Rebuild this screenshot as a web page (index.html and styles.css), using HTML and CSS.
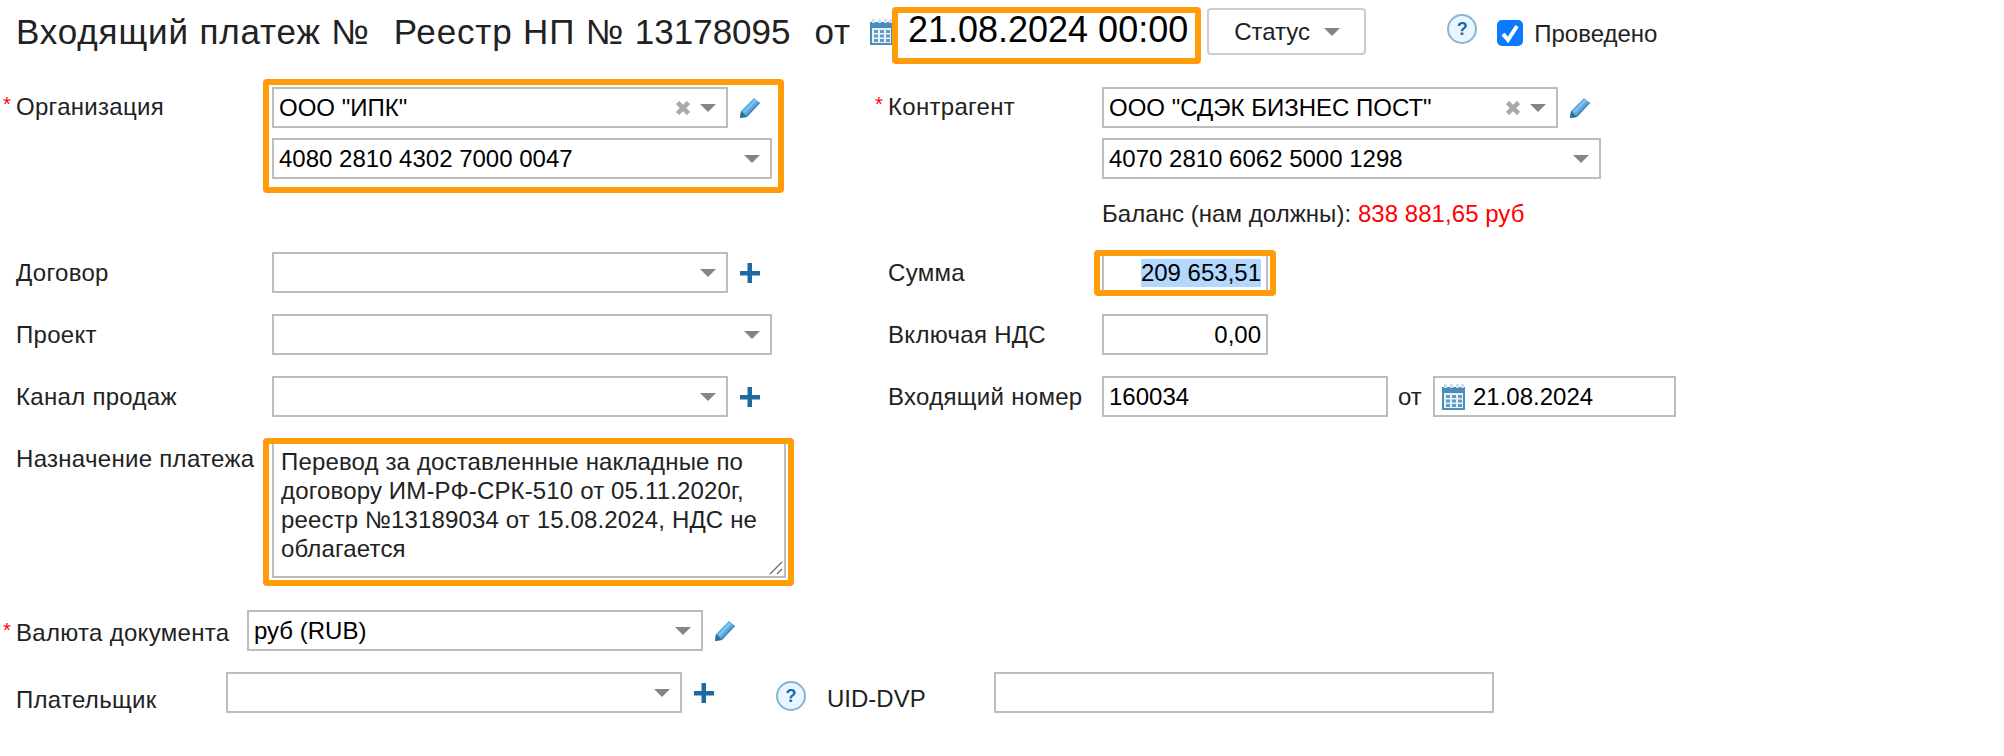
FILE: index.html
```html
<!DOCTYPE html>
<html lang="ru">
<head>
  <meta charset="UTF-8" />
  <title>Входящий платеж</title>
  <link rel="stylesheet" href="styles.css">
</head>
<body>

  <svg class="sprites" width="0" height="0">
    <symbol id="calendar" viewBox="0 0 23 26">
      <rect y="3" width="23" height="23" fill="#4a8dbb"/>
      <path d="M2 0h3v4H2zM8 0h3v4H8zM14 0h3v4h-3zM19 0h3v4h-3z" fill="#cfe0ec"/>
      <rect x="2" y="9" width="19" height="15" fill="#e6f0f7"/>
      <path d="M4 11h4v3H4zM10 11h4v3h-4zM16 11h4v3h-4zM4 15.500h4v3H4zM10 15.500h4v3h-4zM16 15.500h4v3h-4zM4 20h4v3H4zM10 20h4v3h-4zM16 20h4v3h-4z" fill="#5f9cc6"/>
    </symbol>
    <symbol id="pencil" viewBox="0 0 20 20">
      <path d="M14 0l6 5L7 19l-7 1 1-7z" fill="#5aa9e0"/>
      <path d="M1 13l3 3 3 3-7 1z" fill="#2f6d96"/>
      <path d="M19 4l1 1L7 19l-1.500-1z" fill="#4a87b0"/>
      <path d="M14.500 1.500l2 1.500L5 15l-2-1.500z" fill="#82c2ee"/>
    </symbol>
    <symbol id="plus" viewBox="0 0 20 20">
      <path d="M0 8h20v4.500H0zM7.500 0H12v20H7.500z" fill="#1f6a9e"/>
    </symbol>
    <symbol id="caret" viewBox="0 0 16 8">
      <path d="M0 0h16l-8 8z" fill="#858585"/>
    </symbol>
    <symbol id="clear" viewBox="0 0 14 14">
      <path d="M1.500 1.500l11 11M12.500 1.500l-11 11" stroke="#a9a9a9" stroke-width="4.500"/>
    </symbol>
  </svg>

  <div class="title-row">
    <h1 class="title">Входящий платеж №<span class="title-gap">Реестр НП № <span class="title-num">13178095</span></span><span class="title-gap">от</span></h1>
    <svg class="cal-big"><use href="#calendar"/></svg>
    <div class="doc-date mark mark-date">21.08.2024 00:00</div>
    <div class="status-btn">Статус <svg class="caret"><use href="#caret"/></svg></div>
    <div class="help help-top">?</div>
    <span class="check"><svg viewBox="0 0 26 26"><path d="M6 14l5 6 9-14" fill="none" stroke="#fff" stroke-width="4"/></svg></span>
    <span class="check-label">Проведено</span>
  </div>

  <div class="columns">
    <div class="col-left">

      <div class="field field-double">
        <label class="lbl req">Организация</label>
        <div class="stack mark mark-org">
          <div class="with-icon">
            <div class="sel w-short">ООО "ИПК"<span class="sel-icons"><svg class="clear"><use href="#clear"/></svg><svg class="caret"><use href="#caret"/></svg></span></div>
            <svg class="side-icon"><use href="#pencil"/></svg>
          </div>
          <div class="sel w-long">4080 2810 4302 7000 0047<span class="sel-icons"><svg class="caret"><use href="#caret"/></svg></span></div>
        </div>
      </div>

      <div class="field">
        <label class="lbl">Договор</label>
        <div class="with-icon">
          <div class="sel w-short"><span class="sel-icons"><svg class="caret"><use href="#caret"/></svg></span></div>
          <svg class="side-icon"><use href="#plus"/></svg>
        </div>
      </div>

      <div class="field">
        <label class="lbl">Проект</label>
        <div class="sel w-long"><span class="sel-icons"><svg class="caret"><use href="#caret"/></svg></span></div>
      </div>

      <div class="field">
        <label class="lbl">Канал продаж</label>
        <div class="with-icon">
          <div class="sel w-short"><span class="sel-icons"><svg class="caret"><use href="#caret"/></svg></span></div>
          <svg class="side-icon"><use href="#plus"/></svg>
        </div>
      </div>

      <div class="field field-purpose">
        <label class="lbl">Назначение платежа</label>
        <div class="memo mark mark-memo">Перевод за доставленные накладные по<br>договору ИМ-РФ-СРК-510 от 05.11.2020г,<br>реестр №13189034 от 15.08.2024, НДС не<br>облагается<svg class="grip" viewBox="0 0 14 14"><path d="M1 13L13 1M8 13l5-5" stroke="#666" stroke-width="1.200"/></svg></div>
      </div>

    </div>

    <div class="col-right">

      <div class="field field-double">
        <label class="lbl lbl-right req">Контрагент</label>
        <div class="stack">
          <div class="with-icon">
            <div class="sel w-short2">ООО "СДЭК БИЗНЕС ПОСТ"<span class="sel-icons"><svg class="clear"><use href="#clear"/></svg><svg class="caret"><use href="#caret"/></svg></span></div>
            <svg class="side-icon"><use href="#pencil"/></svg>
          </div>
          <div class="sel w-long2">4070 2810 6062 5000 1298<span class="sel-icons"><svg class="caret"><use href="#caret"/></svg></span></div>
          <div class="balance">Баланс (нам должны): <span class="balance-sum">838 881,65 руб</span></div>
        </div>
      </div>

      <div class="field">
        <label class="lbl lbl-right">Сумма</label>
        <div class="inp w-sum mark mark-sum"><span class="selected">209 653,51</span></div>
      </div>

      <div class="field">
        <label class="lbl lbl-right">Включая НДС</label>
        <div class="inp w-sum">0,00</div>
      </div>

      <div class="field">
        <label class="lbl lbl-right">Входящий номер</label>
        <div class="inp inp-left w-num">160034</div>
        <span class="ot">от</span>
        <div class="inp inp-left w-date"><svg class="cal-small"><use href="#calendar"/></svg>21.08.2024</div>
      </div>

    </div>
  </div>

  <div class="field field-currency">
    <label class="lbl lbl-currency req">Валюта документа</label>
    <div class="with-icon">
      <div class="sel w-short">руб (RUB)<span class="sel-icons"><svg class="caret"><use href="#caret"/></svg></span></div>
      <svg class="side-icon"><use href="#pencil"/></svg>
    </div>
  </div>

  <div class="field field-payer">
    <label class="lbl lbl-payer">Плательщик</label>
    <div class="with-icon">
      <div class="sel w-short"><span class="sel-icons"><svg class="caret"><use href="#caret"/></svg></span></div>
      <svg class="side-icon"><use href="#plus"/></svg>
    </div>
    <div class="help help-uid">?</div>
    <span class="uid-label">UID-DVP</span>
    <div class="inp w-uid"></div>
  </div>

</body>
</html>
```

FILE: styles.css
```css
body {
  font-family: "Liberation Sans", Arial, sans-serif;
  font-size: 24px;
  color: #222;
  background: white;
  margin: 0;
  padding: 0;
}
.sprites {
  display: block;
}

/* top line */
.title-row {
  display: flex;
  align-items: flex-start;
  height: 87px;
  padding-left: 16px;
}
.title {
  margin: 12px 0 0;
  font-size: 35px;
  line-height: 40px;
  font-weight: normal;
  letter-spacing: 0.85px;
  white-space: nowrap;
}
.title-gap {
  margin-left: 24px;
}
.title-num {
  letter-spacing: 0;
}
.cal-big {
  width: 23px;
  height: 26px;
  margin: 19px 0 0 19px;
}
.doc-date {
  margin: 7px 0 0 15px;
  font-size: 36px;
  line-height: 46px;
  color: #000;
  white-space: nowrap;
}
.status-btn {
  display: flex;
  align-items: center;
  gap: 14px;
  flex: none;
  box-sizing: border-box;
  width: 159px;
  height: 47px;
  margin: 8px 0 0 19px;
  padding-left: 25px;
  border: 2px solid #ccc;
  border-radius: 4px;
  color: #222;
}
.help {
  flex: none;
  box-sizing: border-box;
  width: 30px;
  height: 30px;
  border: 2px solid #85b5d3;
  border-radius: 50%;
  background: #e9f6ff;
  color: #1a6aa5;
  font-size: 18px;
  font-weight: bold;
  line-height: 26px;
  text-align: center;
}
.help-top {
  margin: 14px 0 0 81px;
}
.check {
  display: block;
  flex: none;
  width: 26px;
  height: 26px;
  margin: 20px 0 0 20px;
  background: #0a7aff;
  border-radius: 5px;
}
.check svg {
  display: block;
}
.check-label {
  margin: 20px 0 0 11px;
  line-height: 28px;
}

/* highlight frames lie over the controls */
.mark {
  position: relative;
}
.mark::after {
  content: "";
  position: absolute;
  inset: 0;
  border: 6px solid #ff9c0a;
  border-radius: 4px;
  pointer-events: none;
}
.mark-date::after {
  inset: 0 -13px -11px -16px;
}
.mark-org::after {
  inset: -8px -12px -14px -9px;
}
.mark-memo::after {
  inset: -5px -10px -10px -11px;
}
.mark-sum::after {
  inset: -4px -10px -5px -10px;
}

/* form */
.columns {
  display: flex;
}
.col-left {
  width: 888px;
  flex: none;
}
.field {
  display: flex;
  align-items: flex-start;
  margin-bottom: 21px;
}
.field-double {
  height: 144px;
}
.lbl {
  flex: none;
  box-sizing: border-box;
  width: 272px;
  height: 41px;
  padding-left: 16px;
  line-height: 42px;
  letter-spacing: 0.3px;
  white-space: nowrap;
}
.field-double .lbl {
  line-height: 35px;
}
.lbl-right {
  width: 214px;
  padding-left: 0;
}
.req::before {
  content: "*";
  display: inline-block;
  width: 13px;
  margin-left: -13px;
  color: #f00;
  font-size: 20px;
  vertical-align: 4px;
}
.stack {
  display: flex;
  flex-direction: column;
  gap: 10px;
}
.with-icon {
  display: flex;
  align-items: center;
  gap: 12px;
}
.side-icon {
  flex: none;
  width: 20px;
  height: 20px;
}
.sel, .inp {
  box-sizing: border-box;
  display: flex;
  align-items: center;
  flex: none;
  height: 41px;
  padding: 0 5px;
  border: 2px solid #bdbdbd;
  background: white;
  color: #000;
  white-space: nowrap;
}
.sel-icons {
  display: flex;
  align-items: center;
  gap: 10px;
  margin-left: auto;
  padding-right: 5px;
}
.caret {
  width: 16px;
  height: 8px;
}
.clear {
  width: 14px;
  height: 14px;
}
.w-short {
  width: 456px;
}
.w-long {
  width: 500px;
}
.w-short2 {
  width: 456px;
}
.w-long2 {
  width: 499px;
}
.balance {
  margin-top: 11px;
  line-height: 28px;
  letter-spacing: 0.05px;
  white-space: nowrap;
}
.balance-sum {
  color: #f00;
}
.inp {
  justify-content: flex-end;
}
.inp-left {
  justify-content: flex-start;
}
.w-sum {
  width: 166px;
}
.w-num {
  width: 286px;
}
.w-date {
  width: 243px;
}
.w-uid {
  width: 500px;
}
.selected {
  background: #b3d7ff;
  line-height: 28px;
}
.ot {
  flex: none;
  box-sizing: border-box;
  width: 45px;
  padding-left: 10px;
  line-height: 41px;
}
.cal-small {
  flex: none;
  width: 23px;
  height: 26px;
  margin: 0 8px 0 2px;
}
.field-purpose {
  margin-bottom: 0;
}
.memo {
  box-sizing: border-box;
  flex: none;
  width: 514px;
  height: 137px;
  margin-top: 3px;
  padding: 4px 7px;
  border: 2px solid #bdbdbd;
  line-height: 29px;
  letter-spacing: 0.15px;
  white-space: nowrap;
}
.grip {
  position: absolute;
  right: 1px;
  bottom: 1px;
  width: 14px;
  height: 14px;
}
.field-currency {
  margin-top: 32px;
  margin-bottom: 21px;
}
.lbl-currency {
  width: 247px;
  line-height: 40px;
}
.lbl-payer {
  width: 226px;
  padding-top: 7px;
}
.field-payer {
  margin-bottom: 0;
}
.help-uid {
  margin: 9px 0 0 62px;
}
.uid-label {
  flex: none;
  width: 167px;
  margin: 12px 0 0 21px;
  line-height: 30px;
  box-sizing: border-box;
}
```
